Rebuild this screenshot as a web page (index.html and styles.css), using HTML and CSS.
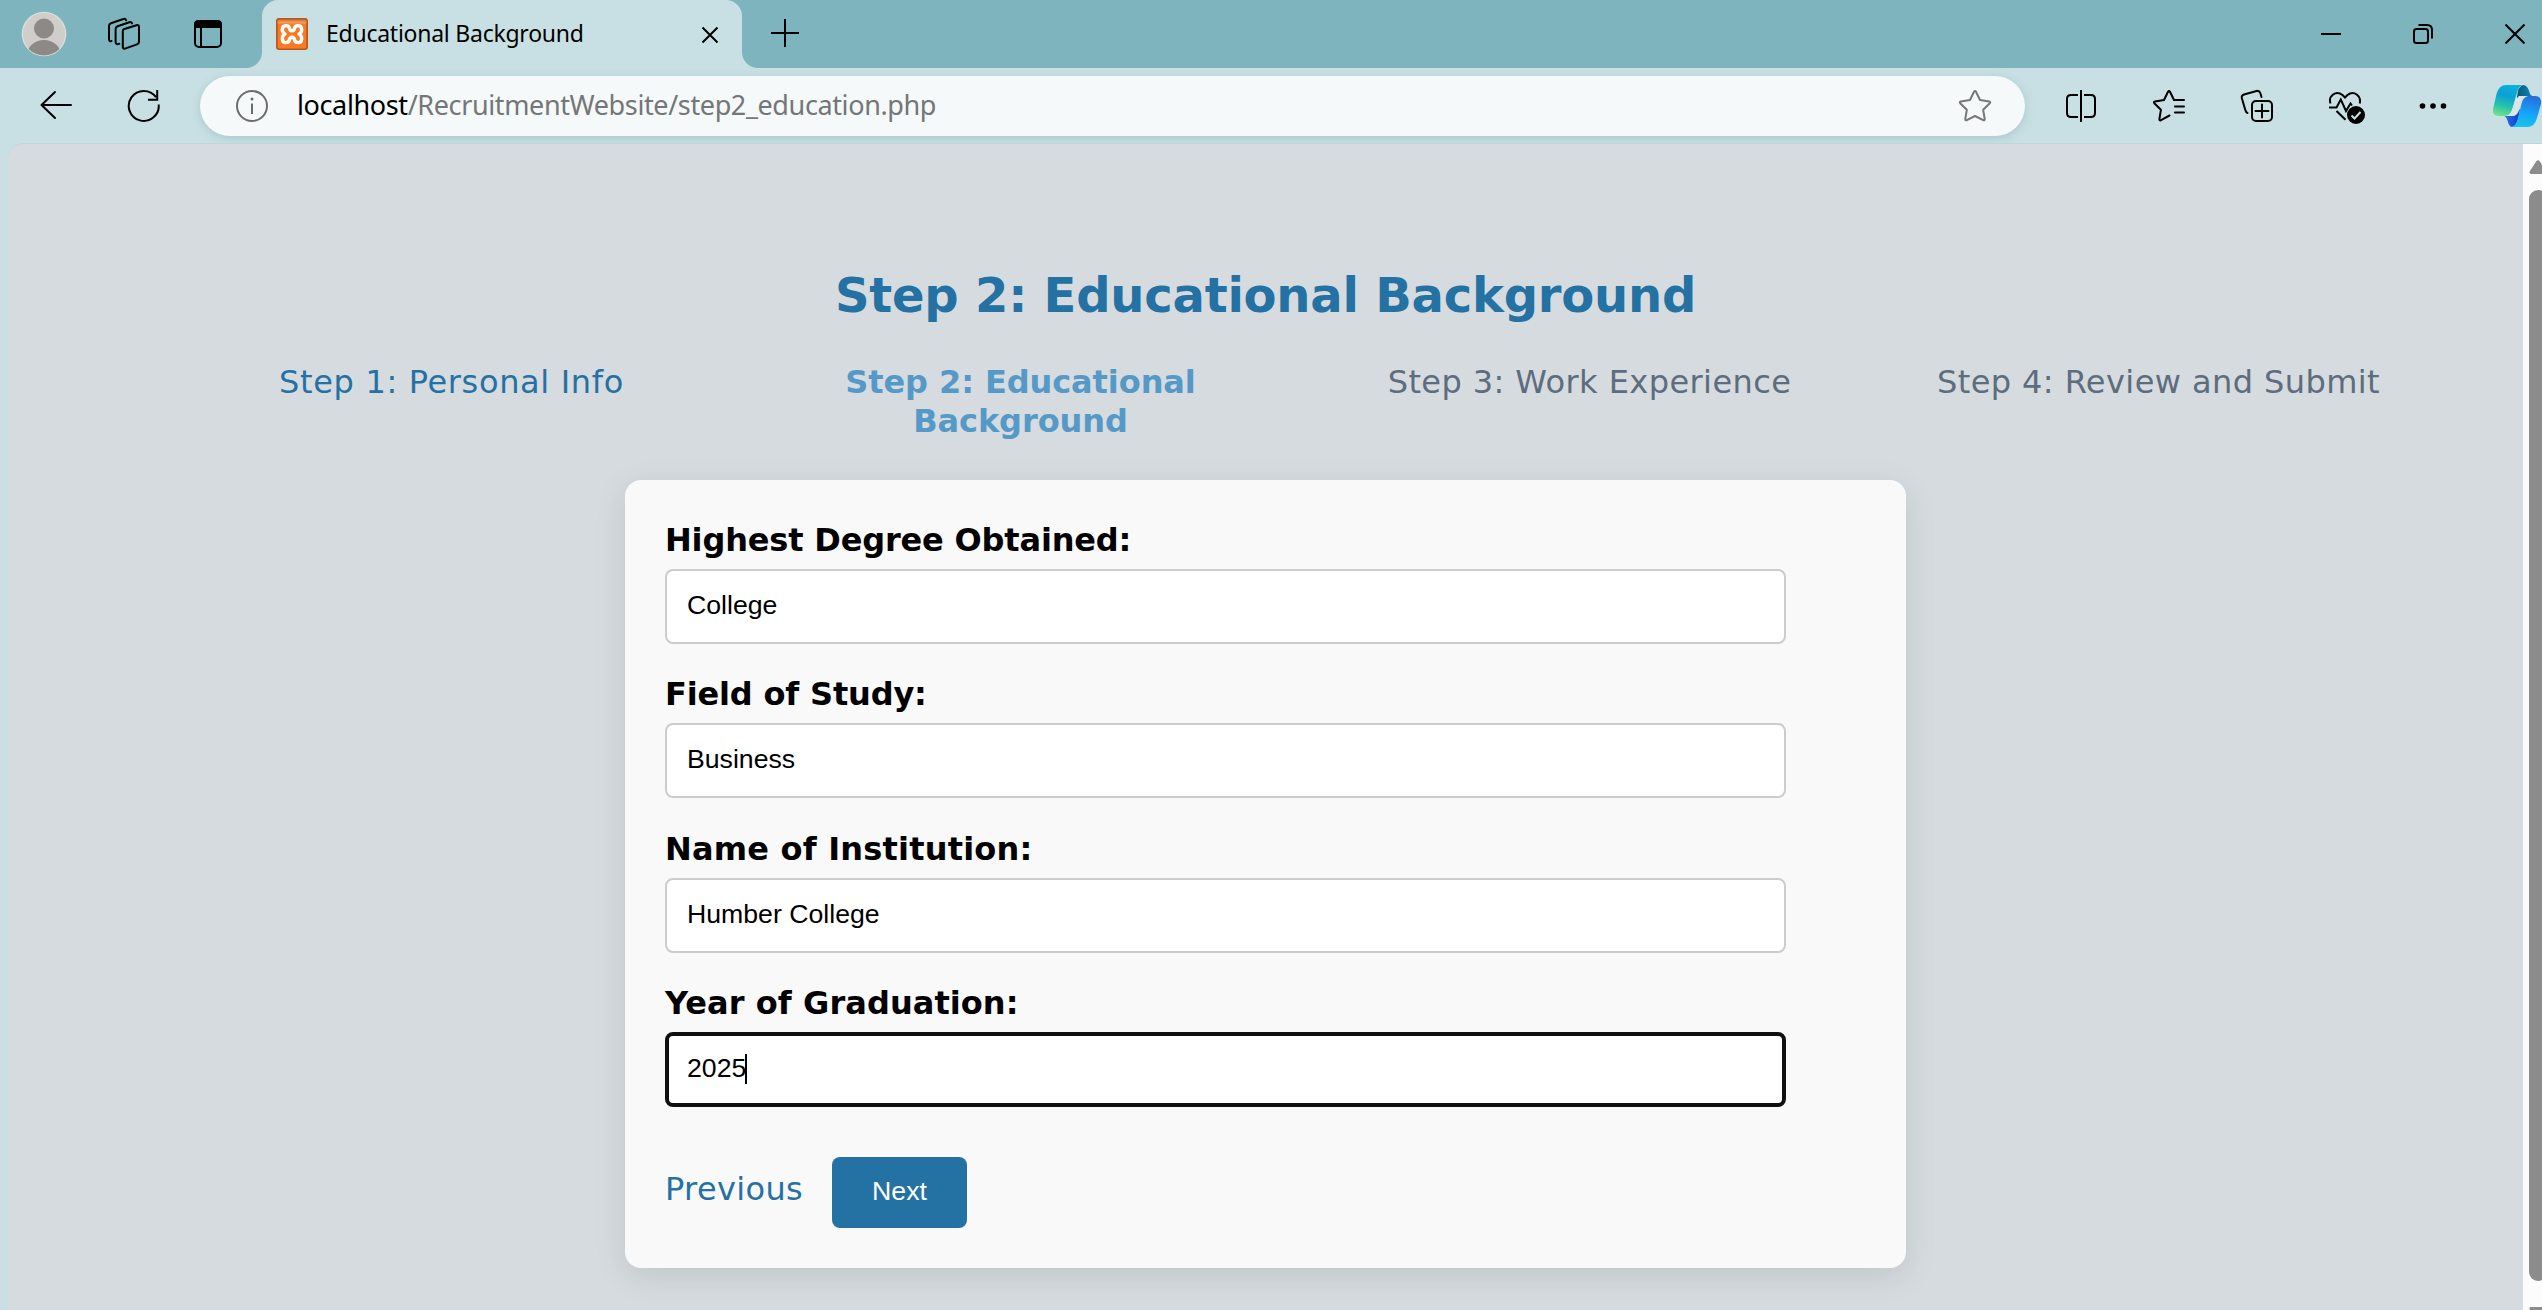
FILE: index.html
```html
<!DOCTYPE html>
<html lang="en">
<head>
<meta charset="utf-8">
<title>Educational Background</title>
<link rel="stylesheet" href="styles.css">
</head>
<body>
<div class="browser">
  <header class="tabstrip">
    <div class="strip-btn">
      <svg width="46" height="46" viewBox="0 0 46 46"><defs><clipPath id="av"><circle cx="23" cy="23" r="21.5"/></clipPath></defs><circle cx="23" cy="23" r="22.3" fill="#e2e0dd"/><circle cx="23" cy="23" r="21.2" fill="#d0cecb"/><g clip-path="url(#av)" fill="#8d8986"><circle cx="23" cy="17.5" r="10"/><ellipse cx="23" cy="45" rx="17.5" ry="16"/></g></svg>
    </div>
    <div class="strip-btn">
      <svg width="34" height="34" viewBox="0 0 34 34" fill="none" stroke="#000" stroke-width="2" stroke-linejoin="round" stroke-linecap="round"><path d="M16.6 12.3 29.5 8.2q2.5-.7 2.5 2v14.500q0 2-2 2.700l-12 4.200q-2.200.6-2.200-1.800V14q0-1.200.8-1.700z"/><path d="M12.300 26.800q-3.700 1.300-3.700-2V12q0-2 1.900-2.700L22.400 5.200q2-.5 2.700 1.200"/><path d="M4.600 24Q2 24.700 2 22V9q0-2 1.900-2.700L16.500 2q2-.6 2.600 1.200"/></svg>
    </div>
    <div class="strip-btn wide">
      <svg width="30" height="30" viewBox="0 0 30 30"><rect x="2" y="2" width="26" height="26" rx="4" fill="none" stroke="#000" stroke-width="2"/><path d="M1 9V5.500Q1 1 5.500 1h19Q29 1 29 5.500V9zM7 8h2v20H7z"/></svg>
    </div>
    <div class="tab">
      <svg class="favicon" width="32" height="32" viewBox="0 0 32 32"><defs><linearGradient id="fv" x2="0" y2="1"><stop stop-color="#c9682a"/><stop offset=".12" stop-color="#f39a5c"/><stop offset=".2" stop-color="#f57a20"/><stop offset="1" stop-color="#fb7a24"/></linearGradient></defs><rect x=".8" y=".8" width="30.400" height="30.400" rx="2.500" fill="url(#fv)" stroke="#b9561a" stroke-width="1.600"/><path d="M9 16Q6.300 14.800 6.300 11.800 6.300 7.600 10 7.600 13 7.600 13.600 10.600 14 12.800 16 12.800 18 12.800 18.400 10.600 19 7.600 22 7.600 25.700 7.600 25.700 11.800 25.700 14.800 23 16 25.700 17.400 25.700 20.400 25.700 24.600 22 24.600 19 24.600 18.400 21.400 18 19.200 16 19.200 14 19.200 13.600 21.400 13 24.600 10 24.600 6.300 24.600 6.300 20.400 6.300 17.400 9 16z" fill="none" stroke="#fff" stroke-width="3.400" stroke-linejoin="round"/></svg>
      <span class="tab-title">Educational Background</span>
      <svg class="tab-close" width="18" height="18" viewBox="0 0 18 18"><path d="M1.500 1.500l15 15m0-15l-15 15" stroke="#000" stroke-width="2"/></svg>
    </div>
    <svg class="newtab" width="28" height="28" viewBox="0 0 28 28"><path d="M0 14h28M14 0v28" stroke="#000" stroke-width="2"/></svg>
    <div class="window-controls">
      <div class="win-btn"><svg width="20" height="20"><path d="M0 10h20" stroke="#000" stroke-width="2"/></svg></div>
      <div class="win-btn"><svg width="20" height="20" viewBox="0 0 20 20" fill="none" stroke="#000" stroke-width="2"><rect x="1" y="5" width="14" height="14" rx="2.500"/><path d="M5.500 1H14q5 0 5 5v8.500"/></svg></div>
      <div class="win-btn"><svg width="20" height="20" viewBox="0 0 20 20"><path d="M.5.5l19 19m0-19l-19 19" stroke="#000" stroke-width="2"/></svg></div>
    </div>
  </header>
  <nav class="toolbar">
    <div class="tool"><svg width="34" height="34" viewBox="0 0 34 34" fill="none" stroke="#000" stroke-width="2" stroke-linecap="round" stroke-linejoin="round"><path d="M32 16H2.500M16 3 2.500 16 16 29"/></svg></div>
    <div class="tool"><svg width="34" height="34" viewBox="0 0 34 34" fill="none" stroke="#000" stroke-width="2"><path d="M31.700 15.500A15 15 0 1 1 29 8.200M30.200 1v9.700H21"/></svg></div>
    <div class="address">
      <svg class="info" width="34" height="34" viewBox="0 0 34 34"><circle cx="17" cy="17" r="15" fill="none" stroke="#6b6c6d" stroke-width="2"/><path d="M16 14.500h2V25h-2z" fill="#6b6c6d"/><circle cx="17" cy="10" r="1.500" fill="#6b6c6d"/></svg>
      <span class="url"><span class="host">localhost</span>/RecruitmentWebsite/step2_education.php</span>
      <svg class="star" width="34" height="34" viewBox="0 0 34 34" fill="none" stroke="#757778" stroke-width="2" stroke-linejoin="round"><path d="M16 2.700q1-1.500 2 0l4 8.300 9.200 1.500q1.700.4.600 1.700l-6.600 6.600 1.500 9.200q0 1.800-1.500 1.200L17 27l-8.200 4.200q-1.500.6-1.500-1.200l1.500-9.200-6.600-6.600q-1.100-1.300.6-1.700L12 11z"/></svg>
    </div>
    <div class="tool split"><svg width="34" height="34" viewBox="0 0 34 34" fill="none" stroke="#000" stroke-width="2"><path d="M17 1v32M14 6H7Q3 6 3 10v14q0 4 4 4h7M20 6h7q4 0 4 4v14q0 4-4 4h-7"/></svg></div>
    <div class="tool"><svg width="34" height="34" viewBox="0 0 34 34" fill="none" stroke="#000" stroke-width="2" stroke-linejoin="round" stroke-linecap="round"><path d="M17.500 26.500 9 31.200q-1.800.7-1.600-1.200l1.500-9.200-6.600-6.600q-1.100-1.300.6-1.700L12 11l4-8.300q1-1.500 2 0l4 8.300h10M23 17.500h9M23 23.500h9"/></svg></div>
    <div class="tool"><svg width="34" height="34" viewBox="0 0 34 34" fill="none" stroke="#000" stroke-width="2" stroke-linecap="round"><path d="M7.500 24Q6 23.500 5.300 21L1.800 9Q1.300 6.300 4 5.500L16.500 2q2.700-.6 3.700 1.800L21.500 8"/><rect x="12" y="12" width="20" height="20" rx="4"/><path d="M22 15.500v13M15.500 22h13"/></svg></div>
    <div class="tool"><svg class="heart" width="38" height="34" viewBox="0 0 38 34" fill="none" stroke="#000" stroke-width="2"><path d="M2.500 13.500C0 6 8 0 14.500 5L17 7.500 19.500 5C26 0 33.500 6 31.700 13.500M1 17.500h7.500l4.300-8 5.200 11.500 4.500-7.500 1.500 2M8.500 21l9 8.700"/><circle cx="28" cy="25" r="9" fill="#000" stroke="none"/><path d="M23.500 25.500l3 3 6-6.500" stroke="#c8e0e4"/></svg></div>
    <div class="tool"><svg width="28" height="8" viewBox="0 0 28 8"><circle cx="3.500" cy="4" r="2.800"/><circle cx="14" cy="4" r="2.800"/><circle cx="24.500" cy="4" r="2.800"/></svg></div>
    <svg class="copilot" width="50" height="44" viewBox="0 0 50 44"><defs><linearGradient id="c1" x1=".6" x2=".35" y2="1"><stop stop-color="#08b3d8"/><stop offset=".35" stop-color="#0ba0d6"/><stop offset=".7" stop-color="#27c4ac"/><stop offset="1" stop-color="#6be08c"/></linearGradient><linearGradient id="c2" x1=".6" x2=".4" y2="1"><stop stop-color="#256fdc"/><stop offset=".6" stop-color="#14a8fb"/><stop offset="1" stop-color="#18c4e8"/></linearGradient><linearGradient id="c3"><stop stop-color="#0b5877"/><stop offset="1" stop-color="#0b86bd"/></linearGradient><linearGradient id="c4"><stop stop-color="#2873f0"/><stop offset="1" stop-color="#123bcb"/></linearGradient></defs><path d="M25 13q1-11 6-12 5 0 7 9l2 2H27q-1 0-2 5z" fill="url(#c3)"/><path d="M12 32q2 0 3.500 4.500Q17 43 20 43q5 0 7-12l1-6-6 7z" fill="url(#c4)"/><path d="M14 1h17q-4.500.5-6.500 9l-3.800 14q-2.200 8-7.700 8H7Q0 32 1 25L4.500 10Q7 1 14 1z" fill="url(#c1)"/><path d="M30 12h13q7 0 6 8l-4 14q-2.500 9-9.500 9H20q4-1 6-9l3.500-14q1.500-7 6.500-8z" fill="url(#c2)"/><path d="M31 12h4q-5 1-6.500 8L27 26q-1.500 6-7 6h-7q5.500 0 7.700-8l2-6.500Q24.500 12 31 12z" fill="#d7e7ea"/></svg>
  </nav>
  <div class="viewport">
    <main class="page">
      <h1 class="title">Step 2: Educational Background</h1>
      <ol class="steps">
        <li class="step done">Step 1: Personal Info</li>
        <li class="step current">Step 2: Educational Background</li>
        <li class="step">Step 3: Work Experience</li>
        <li class="step">Step 4: Review and Submit</li>
      </ol>
      <form class="card">
        <div class="field"><label class="label">Highest Degree Obtained:</label><div class="input">College</div></div>
        <div class="field"><label class="label">Field of Study:</label><div class="input">Business</div></div>
        <div class="field"><label class="label label-loose">Name of Institution:</label><div class="input">Humber College</div></div>
        <div class="field"><label class="label label-normal">Year of Graduation:</label><div class="input focused">2025<i class="caret"></i></div></div>
        <div class="actions"><a class="previous">Previous</a><div class="next">Next</div></div>
      </form>
    </main>
    <aside class="scrollbar">
      <svg class="arrow" width="18" height="14" viewBox="0 0 18 14"><path d="M7.300 1.300Q9-.7 10.700 1.300l6.700 10.200Q18 14 16 14H2Q0 14 .6 11.500z" fill="#8c8c8c"/></svg>
      <div class="thumb"></div>
      <svg class="arrow" width="18" height="14" viewBox="0 0 18 14"><path d="M2 0h14q2 0 1.400 2.500l-6.700 10.200q-1.700 2-3.400 0L.6 2.500Q0 0 2 0z" fill="#8c8c8c"/></svg>
    </aside>
  </div>
</div>
</body>
</html>
```
FILE: styles.css
```css
* { box-sizing: border-box; }
html, body { margin: 0; height: 100%; overflow: hidden; }
body { background: #c8e0e4; font-family: "DejaVu Sans", Verdana, sans-serif; font-size: 32px; color: #000; }
svg { display: block; flex: none; }
.browser { display: flex; flex-direction: column; width: 2542px; height: 1310px; overflow: hidden; }

/* tab strip */
.tabstrip { display: flex; height: 68px; flex: none; background: #7eb4be; padding-left: 4px; }
.strip-btn { width: 80px; display: flex; align-items: center; justify-content: center; }
.wide { width: 88px; }
.tab { position: relative; display: flex; align-items: center; width: 480px; margin-left: 10px; padding: 0 23px 0 14px; background: #c8e0e4; border-radius: 16px 16px 0 0; font-family: "Noto Sans", "Open Sans", sans-serif; font-size: 23px; }
.tab::before, .tab::after { content: ""; position: absolute; bottom: 0; width: 16px; height: 16px; }
.tab::before { left: -16px; background: radial-gradient(circle at 0 0, transparent 15.5px, #c8e0e4 16.5px); }
.tab::after { right: -16px; background: radial-gradient(circle at 100% 0, transparent 15.5px, #c8e0e4 16.5px); }
.tab-title { margin-left: 18px; padding-bottom: 2px; flex: 1; white-space: nowrap; letter-spacing: -.25px; }
.tab-close { margin-top: 2px; }
.newtab { margin: 19px 0 0 29px; }
.window-controls { display: flex; margin-left: auto; margin-right: -19px; }
.win-btn { width: 92px; display: flex; align-items: center; justify-content: center; }

/* toolbar */
.toolbar { display: flex; align-items: center; height: 75px; flex: none; padding-left: 12px; background: #c8e0e4; }
.tool { width: 88px; flex: none; display: flex; justify-content: center; }
.split { width: 89px; margin-left: 11px; }
.heart { margin: 2px 0 0 4px; }
.address { display: flex; align-items: center; width: 1825px; flex: none; height: 60px; margin-left: 12px; padding: 0 33px 0 35px; border-radius: 30px; background: #f5f9fa; box-shadow: 0 2px 10px rgba(60, 110, 120, .22); font-family: "Noto Sans", "Open Sans", sans-serif; font-size: 27px; color: #747677; }
.url { margin-left: 28px; padding-bottom: 2px; flex: 1; white-space: nowrap; letter-spacing: -.38px; }
.host { color: #000; }
.copilot { margin-left: 15px; }

/* page viewport */
.viewport { display: flex; flex: 1; margin-left: 8px; min-height: 0; border-top: 1px solid #c0d6db; border-top-left-radius: 16px; overflow: hidden; background: #d6dbdf; }
.page { width: 2515px; flex: none; padding-top: 122px; }
.title { margin: 0; font-size: 48px; line-height: 58px; letter-spacing: -.22px; text-align: center; color: #2471a3; }
.steps { display: grid; grid-template-columns: repeat(4, 569px); margin: 39px 0 0 159px; padding: 0; list-style: none; }
.step { padding: 0 20px; line-height: 39px; letter-spacing: .42px; text-align: center; color: #5d6d7e; }
.done { color: #2471a3; letter-spacing: .65px; }
.current { color: #5499c7; font-weight: bold; letter-spacing: -.08px; }
.card { width: 1281px; height: 788px; margin: 39px auto 0 617px; padding: 40px; border-radius: 16px; background: #f9f9f9; box-shadow: 0 8px 32px rgba(0, 0, 0, .1); }
.field { height: 154.4px; }
.label { display: block; height: 49px; line-height: 41px; font-weight: bold; letter-spacing: -.17px; }
.label-loose { letter-spacing: .2px; }
.label-normal { letter-spacing: .07px; }
.input { display: flex; align-items: center; width: 1121px; height: 75px; padding: 0 20px 2px; border: 2px solid #ccc; border-radius: 8px; background: #fff; font-family: "Liberation Sans", Arial, sans-serif; font-size: 26.67px; }
.focused { border: 4px solid #101010; padding: 0 18px 2px; }
.caret { width: 2px; height: 30px; margin-left: -1px; background: #000; }
.actions { display: flex; margin-top: 19px; }
.previous { width: 167px; line-height: 65px; letter-spacing: .35px; color: #2471a3; }
.next { width: 135px; height: 71px; border-radius: 8px; background: #2471a3; color: #fff; font: 26.67px/69px "Liberation Sans", Arial, sans-serif; text-align: center; }

/* scrollbar */
.scrollbar { width: 30px; flex: none; padding: 16px 6px 0; background: #fcfcfc; }
.thumb { width: 18px; height: 1091px; margin: 16px 0 26px; border-radius: 9px; background: #8c8c8c; }
```
